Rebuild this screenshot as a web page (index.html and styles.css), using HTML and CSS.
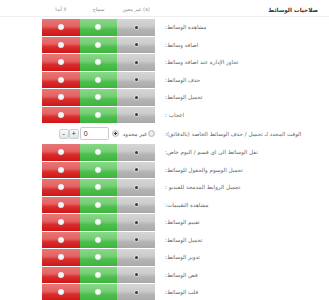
FILE: index.html
```html
<!DOCTYPE html>
<html lang="ar">
<head>
<meta charset="utf-8">
<link rel="stylesheet" href="styles.css">
</head>
<body>
<div class="panel">
  <div class="head">
    <div class="cols">
      <span class="c c1">لا أبدا</span>
      <span class="c c2">سماح</span>
      <span class="c c3">غير معين (x)</span>
    </div>
    <div class="title">صلاحيات الوسائط</div>
  </div>

  <div class="row"><div class="opts"><span class="opt no"><i class="dot"></i></span><span class="opt yes"><i class="dot"></i></span><span class="opt unset"><i class="sel"></i></span></div><div class="label">مشاهدة الوسائط:</div></div>
  <div class="row"><div class="opts"><span class="opt no"><i class="dot"></i></span><span class="opt yes"><i class="dot"></i></span><span class="opt unset"><i class="sel"></i></span></div><div class="label">اضافة وسائط:</div></div>
  <div class="row"><div class="opts"><span class="opt no"><i class="dot"></i></span><span class="opt yes"><i class="dot"></i></span><span class="opt unset"><i class="sel"></i></span></div><div class="label">تجاوز الإدارة عند اضافة وسائط:</div></div>
  <div class="row"><div class="opts"><span class="opt no"><i class="dot"></i></span><span class="opt yes"><i class="dot"></i></span><span class="opt unset"><i class="sel"></i></span></div><div class="label">حذف الوسائط:</div></div>
  <div class="row"><div class="opts"><span class="opt no"><i class="dot"></i></span><span class="opt yes"><i class="dot"></i></span><span class="opt unset"><i class="sel"></i></span></div><div class="label">تحميل الوسائط:</div></div>
  <div class="row"><div class="opts"><span class="opt no"><i class="dot"></i></span><span class="opt yes"><i class="dot"></i></span><span class="opt unset"><i class="sel"></i></span></div><div class="label">اعجاب :</div></div>

  <div class="row special">
    <div class="ctrl">
      <span class="btn">-</span>
      <span class="btn">+</span>
      <span class="input">0</span>
      <span class="radio checked"></span>
      <span class="rtext">غير محدود</span>
      <span class="radio"></span>
    </div>
    <div class="label">الوقت المحدد لـ تحميل / حذف الوسائط الخاصة (بالدقائق):</div>
  </div>

  <div class="row"><div class="opts"><span class="opt no"><i class="dot"></i></span><span class="opt yes"><i class="dot"></i></span><span class="opt unset"><i class="sel"></i></span></div><div class="label">نقل الوسائط الى اي قسم / البوم خاص:</div></div>
  <div class="row"><div class="opts"><span class="opt no"><i class="dot"></i></span><span class="opt yes"><i class="dot"></i></span><span class="opt unset"><i class="sel"></i></span></div><div class="label">تحميل الوسوم والحقول للوسائط:</div></div>
  <div class="row"><div class="opts"><span class="opt no"><i class="dot"></i></span><span class="opt yes"><i class="dot"></i></span><span class="opt unset"><i class="sel"></i></span></div><div class="label">تحميل الروابط المدمجة للفيديو :</div></div>
  <div class="row"><div class="opts"><span class="opt no"><i class="dot"></i></span><span class="opt yes"><i class="dot"></i></span><span class="opt unset"><i class="sel"></i></span></div><div class="label">مشاهدة التقييمات:</div></div>
  <div class="row"><div class="opts"><span class="opt no"><i class="dot"></i></span><span class="opt yes"><i class="dot"></i></span><span class="opt unset"><i class="sel"></i></span></div><div class="label">تقييم الوسائط:</div></div>
  <div class="row"><div class="opts"><span class="opt no"><i class="dot"></i></span><span class="opt yes"><i class="dot"></i></span><span class="opt unset"><i class="sel"></i></span></div><div class="label">تحميل الوسائط:</div></div>
  <div class="row"><div class="opts"><span class="opt no"><i class="dot"></i></span><span class="opt yes"><i class="dot"></i></span><span class="opt unset"><i class="sel"></i></span></div><div class="label">تدوير الوسائط:</div></div>
  <div class="row"><div class="opts"><span class="opt no"><i class="dot"></i></span><span class="opt yes"><i class="dot"></i></span><span class="opt unset"><i class="sel"></i></span></div><div class="label">قص الوسائط:</div></div>
  <div class="row"><div class="opts"><span class="opt no"><i class="dot"></i></span><span class="opt yes"><i class="dot"></i></span><span class="opt unset"><i class="sel"></i></span></div><div class="label">قلب الوسائط:</div></div>
</div>
</body>
</html>
```
FILE: styles.css
```css
html, body {
  margin: 0;
  padding: 0;
  background: #fff;
}
body {
  font-family: Tahoma, "DejaVu Sans", sans-serif;
  overflow: hidden;
  direction: ltr;
}
.head {
  display: flex;
  align-items: center;
  height: 16px;
  border-bottom: 1px solid #efefef;
  margin-bottom: 2px;
}
.cols {
  display: grid;
  grid-template-columns: 1fr 1fr 1fr;
  direction: ltr;
  width: 113px;
  margin-left: 42px;
  font-size: 5px;
  color: #888;
  text-align: center;
  padding-top: 2px;
}
.c {
  unicode-bidi: isolate;
  direction: ltr;
}
.c1 { grid-column: 1; grid-row: 1; }
.c2 { grid-column: 2; grid-row: 1; }
.c3 { grid-column: 3; grid-row: 1; }
.title {
  direction: rtl;
  margin-left: auto;
  margin-right: 11px;
  font-size: 5.7px;
  font-weight: bold;
  color: #333;
  padding-top: 3px;
}
.row {
  display: flex;
  align-items: center;
  height: 16.5px;
  margin-bottom: 1px;
}
.opts {
  display: grid;
  grid-template-columns: repeat(3, 1fr);
  width: 113px;
  height: 100%;
  margin-left: 42px;
}
.opt {
  display: flex;
  align-items: center;
  justify-content: center;
}
.no {
  background: linear-gradient(to bottom, #e87676 0%, #e46363 42%, #d82c2c 62%, #d01616 100%);
}
.yes {
  background: linear-gradient(to bottom, #88d888 0%, #74ce74 42%, #4cbe4c 62%, #3db53d 100%);
}
.unset {
  background: linear-gradient(to bottom, #d6d6d6 0%, #cbcbcb 42%, #b4b4b4 62%, #a9a9a9 100%);
}
.dot {
  display: block;
  width: 6px;
  height: 6px;
  border-radius: 50%;
  background: radial-gradient(circle at 50% 40%, #ffffff 0%, #eeeeee 55%, #d0d0d0 100%);
}
.sel {
  display: block;
  width: 3px;
  height: 3px;
  border-radius: 50%;
  background: #3a3a3a;
  box-shadow: 0 0 0 1px rgba(255, 255, 255, 0.35);
}
.label {
  direction: rtl;
  unicode-bidi: isolate;
  margin-left: 10px;
  font-size: 5.6px;
  color: #666;
  white-space: nowrap;
}
.row.special {
  height: 19px;
}
.ctrl {
  display: flex;
  justify-content: flex-end;
  align-items: center;
  direction: ltr;
  width: 113px;
  margin-left: 42px;
  height: 100%;
}
.btn {
  display: flex;
  align-items: center;
  justify-content: center;
  box-sizing: border-box;
  width: 10px;
  height: 10px;
  border: 1px solid #cfcfcf;
  border-radius: 2px;
  background: linear-gradient(to bottom, #fafafa, #e4e4e4);
  font-size: 7px;
  color: #333;
  font-family: "Liberation Sans", sans-serif;
  line-height: 1;
}
.input {
  box-sizing: border-box;
  width: 29px;
  height: 13px;
  margin-left: 1px;
  border: 1px solid #cccccc;
  border-radius: 2px;
  padding-left: 3px;
  font-size: 7px;
  line-height: 11px;
  color: #333;
  font-family: "Liberation Sans", sans-serif;
}
.radio {
  box-sizing: border-box;
  width: 7px;
  height: 7px;
  border-radius: 50%;
  border: 1px solid #b8b8b8;
  background: radial-gradient(circle, #f4f4f4 0%, #dcdcdc 100%);
}
.radio.checked {
  margin-left: 3px;
  background: radial-gradient(circle, #333 0 30%, #e8e8e8 40%, #d4d4d4 100%);
}
.rtext {
  direction: rtl;
  unicode-bidi: isolate;
  font-size: 5.6px;
  color: #555;
  margin-left: 4px;
  margin-right: 1px;
}
```
